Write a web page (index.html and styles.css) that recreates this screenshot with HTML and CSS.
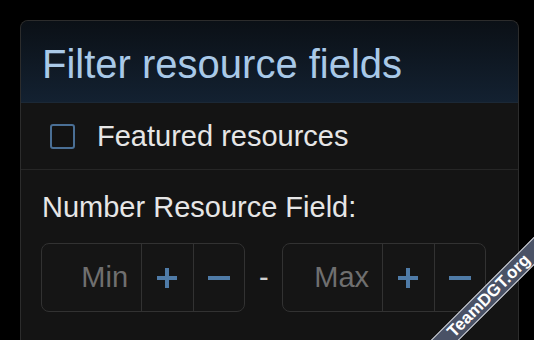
FILE: index.html
```html
<!DOCTYPE html>
<html lang="en">
<head>
<meta charset="utf-8">
<title>Filter resource fields</title>
<link rel="stylesheet" href="styles.css">
</head>
<body>
<div class="page">
  <section class="panel">
    <header class="panel-head">
      <h2 class="panel-title">Filter resource fields</h2>
    </header>
    <div class="row row-check">
      <span class="checkbox"></span>
      <span class="check-label">Featured resources</span>
    </div>
    <div class="row row-number">
      <div class="field-label">Number Resource Field:</div>
      <div class="range">
        <div class="spinner">
          <span class="spin-input">Min</span>
          <span class="spin-btn"><svg width="22" height="22" viewBox="0 0 22 22"><path d="M11 1v20M1 11h20" stroke="#4f7ba7" stroke-width="4"/></svg></span>
          <span class="spin-btn"><svg width="22" height="22" viewBox="0 0 22 22"><path d="M0 11h22" stroke="#4f7ba7" stroke-width="4"/></svg></span>
        </div>
        <span class="range-sep">-</span>
        <div class="spinner">
          <span class="spin-input">Max</span>
          <span class="spin-btn"><svg width="22" height="22" viewBox="0 0 22 22"><path d="M11 1v20M1 11h20" stroke="#4f7ba7" stroke-width="4"/></svg></span>
          <span class="spin-btn"><svg width="22" height="22" viewBox="0 0 22 22"><path d="M0 11h22" stroke="#4f7ba7" stroke-width="4"/></svg></span>
        </div>
      </div>
    </div>
  </section>
</div>
<div class="ribbon">TeamDGT.org</div>
</body>
</html>
```
FILE: styles.css
```css
html, body {
  margin: 0;
  height: 100%;
  overflow: hidden;
  background: #000;
}
body {
  font-family: "Liberation Sans", Arial, sans-serif;
  position: relative;
}
.page {
  padding: 20px 15px 0 20px;
}
.panel {
  width: 497px;
  height: 360px;
  border: 1px solid #2c2c2c;
  border-bottom: none;
  border-radius: 8px 8px 0 0;
  background: #141414;
  overflow: hidden;
}
.panel-head {
  padding: 20px 21px 15px;
  background: linear-gradient(#0b1016, #132131);
  border-bottom: 1px solid #1b2836;
}
.panel-title {
  margin: 0;
  font-weight: normal;
  font-size: 40px;
  line-height: 46px;
  color: #a9c9e8;
}
.row-check {
  display: flex;
  align-items: center;
  gap: 22px;
  height: 67px;
  box-sizing: border-box;
  padding: 0 0 0 29px;
  border-bottom: 1px solid #262626;
}
.checkbox {
  width: 21px;
  height: 21px;
  border: 2px solid #4a6f95;
  border-radius: 3px;
  background: #121212;
}
.check-label {
  font-size: 29px;
  line-height: 32px;
  color: #e6e6e6;
}
.row-number {
  padding: 21px 21px 0;
}
.field-label {
  font-size: 29px;
  line-height: 32px;
  color: #e6e6e6;
}
.range {
  display: flex;
  align-items: center;
  gap: 14px;
  margin: 20px 0 0 -1px;
}
.spinner {
  display: flex;
  width: 204px;
  height: 69px;
  box-sizing: border-box;
  border: 1px solid #323232;
  border-radius: 8px;
  background: #151515;
}
.spin-input {
  width: 100px;
  box-sizing: border-box;
  padding-right: 13px;
  display: flex;
  align-items: center;
  justify-content: flex-end;
  font-size: 29px;
  color: #6f6f6f;
}
.spin-btn {
  width: 51px;
  display: flex;
  align-items: center;
  justify-content: center;
  border-left: 1px solid #323232;
}
.range-sep {
  font-size: 29px;
  color: #cfcfcf;
  width: 9px;
}
.ribbon {
  position: absolute;
  left: 369px;
  top: 286px;
  width: 240px;
  height: 20px;
  box-sizing: border-box;
  transform: rotate(-45deg);
  background: #4a5266;
  border-top: 1px solid rgba(255,255,255,0.75);
  border-bottom: 1px solid rgba(255,255,255,0.75);
  color: #fff;
  font-weight: bold;
  font-size: 17px;
  line-height: 18px;
  text-align: center;
}
```
